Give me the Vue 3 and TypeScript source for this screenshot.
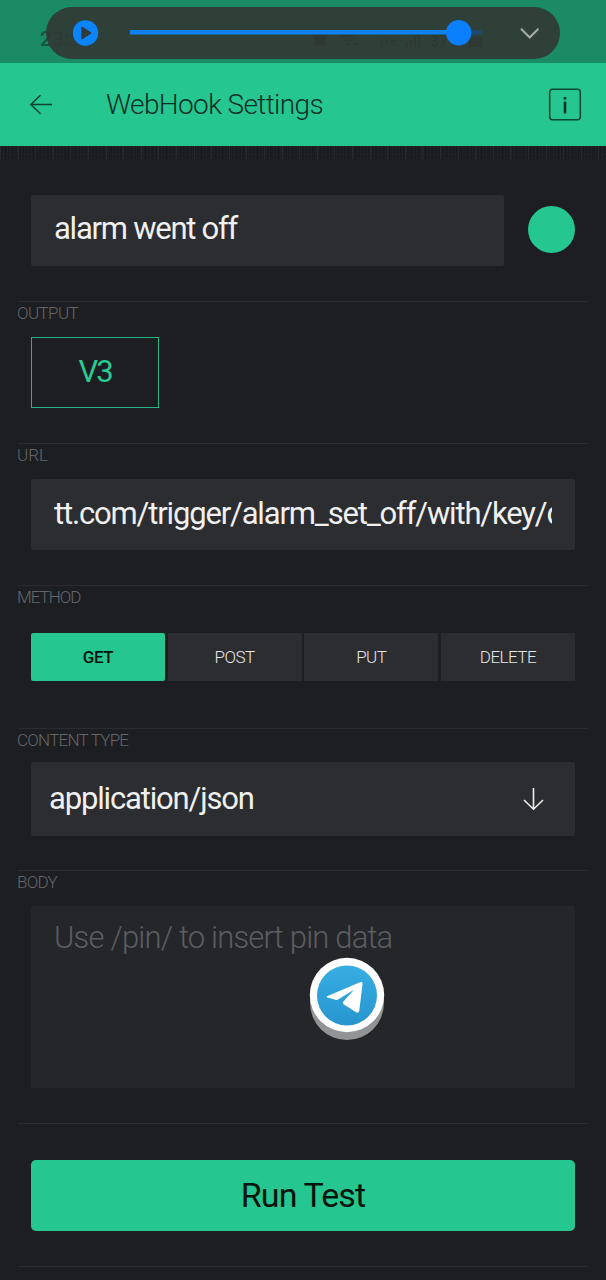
<script setup lang="ts">
import { ref } from 'vue'

const methods = ['GET', 'POST', 'PUT', 'DELETE']
const method = ref('GET')
const url = 'tt.com/trigger/alarm_set_off/with/key/d'
</script>

<template>
  <div class="screen">
    <div class="status">
      <span class="clock">23:51</span>
      <div class="tray">
        <svg width="58" height="14" viewBox="0 0 58 14">
          <path d="M1 1h12v11H1z" fill="currentColor" />
          <path d="M27 4q7-5 14 0M30 7q4-3 8 0M33 10h3M42 10h4" fill="none" stroke="currentColor" stroke-width="2" />
        </svg>
        <span class="lte">LTE</span>
        <svg width="16" height="14" viewBox="0 0 16 14">
          <path d="M2 13V9M6 13V6M10 13V3M14 13V1" stroke="currentColor" stroke-width="2" />
        </svg>
        <span class="charge">37%</span>
        <svg width="14" height="14" viewBox="0 0 14 14"><path d="M0 3h13v10H0z" fill="currentColor" /></svg>
      </div>
      <div class="player">
        <svg width="514" height="52" viewBox="0 0 514 52">
          <circle cx="39.5" cy="26" r="12.7" fill="#0a84ff" />
          <path d="M36 20.5l8.5 5.5-8.5 5.5z" fill="#303b37" stroke="#303b37" stroke-width="1.5" stroke-linejoin="round" />
          <path d="M413 25.5h23" stroke="#1d4a70" stroke-width="4.5" />
          <path d="M84 25.3h329" stroke="#1181f0" stroke-width="4.6" />
          <circle cx="412.7" cy="25.8" r="12.7" fill="#0a80ff" />
          <path d="M475 21.8l8.7 8.7 8.7-8.7" fill="none" stroke="#a6aaa8" stroke-width="2.1" />
        </svg>
      </div>
    </div>

    <header class="bar">
      <svg class="back" width="24" height="22" viewBox="0 0 24 22">
        <path d="M23 10.5H1.8M11.5 1.3L1.8 10.5l9.7 9.2" fill="none" stroke="#0c4231" stroke-width="1.5" />
      </svg>
      <h1>WebHook Settings</h1>
      <svg class="info" width="34" height="34" viewBox="0 0 34 34">
        <rect x="1.7" y="1.2" width="30.6" height="30.6" rx="3" fill="none" stroke="#0c4833" stroke-width="1.6" />
        <path d="M17 13.4v12.2M17 9v2.4" stroke="#0b3024" stroke-width="2.6" />
      </svg>
    </header>
    <div class="ruler"></div>

    <main>
      <div class="name-row">
        <div class="field name"><span>alarm went off</span></div>
        <i class="swatch"></i>
      </div>

      <section class="output">
        <h2>OUTPUT</h2>
        <div class="pin"><span>V3</span></div>
      </section>

      <section class="url">
        <h2>URL</h2>
        <div class="field"><span class="clip">{{ url }}</span></div>
      </section>

      <section class="method">
        <h2>METHOD</h2>
        <div class="tabs">
          <button v-for="m in methods" :key="m" :class="{ on: m === method }" @click="method = m">{{ m }}</button>
        </div>
      </section>

      <section class="type">
        <h2>CONTENT TYPE</h2>
        <div class="field select">
          <span>application/json</span>
          <svg width="22" height="24" viewBox="0 0 22 24">
            <path d="M11.5 1v21M2 13l9.5 9.2L21 13" fill="none" stroke="#eee" stroke-width="1.6" />
          </svg>
        </div>
      </section>

      <section class="body">
        <h2>BODY</h2>
        <div class="area"><span>Use /pin/ to insert pin data</span></div>
      </section>

      <section class="run">
        <button class="test"><span>Run Test</span></button>
      </section>
      <section class="tail"></section>
    </main>

    <svg class="bubble" width="80" height="88" viewBox="0 0 80 88">
      <defs>
        <linearGradient id="sky" x1="0" y1="0" x2="0" y2="1">
          <stop offset="0" stop-color="#37aee2" />
          <stop offset="1" stop-color="#2795cf" />
        </linearGradient>
      </defs>
      <circle cx="40" cy="48" r="37" fill="#929394" />
      <circle cx="40" cy="40" r="37.2" fill="#fff" />
      <circle cx="40" cy="40.5" r="30" fill="url(#sky)" />
      <path d="M20 41.2L53 27.2q2.8-1 2.5 2L52.3 55.5q-.7 3.2-3.2 1.8L36.6 49.2q-1.6-1.3-.2-2.7L47 34.8 31 44.5q-1.2.7-2.5.2l-8.1-2.3q-1.2-.5-.4-1.2z" fill="#fff" />
    </svg>
  </div>
</template>

<style>
body {
  background: #1d1e22;
}
</style>

<style scoped>
.screen {
  position: relative;
  width: 606px;
  height: 1280px;
  overflow: hidden;
  background: #1d1e22;
  font-family: Roboto, 'Liberation Sans', sans-serif;
  font-weight: 300;
}
.status {
  position: relative;
  height: 63px;
  background: #1a8b64;
  color: #145440;
}
.clock {
  position: absolute;
  left: 40px;
  top: 26px;
  font-size: 21px;
  line-height: 26px;
  font-weight: 500;
}
.tray {
  position: absolute;
  left: 313px;
  top: 33px;
  height: 16px;
  display: flex;
  align-items: center;
  gap: 9px;
  font-size: 16px;
  font-weight: 500;
  color: #12442f;
}
.lte {
  font-size: 10px;
}
.player {
  position: absolute;
  left: 46px;
  top: 7px;
  width: 514px;
  height: 52px;
  border-radius: 26px;
  background: rgba(50, 56, 53, 0.91);
}
.player svg {
  display: block;
}
.bar {
  height: 83px;
  background: #25c68f;
  display: flex;
  align-items: center;
  padding: 0 24px 0 29px;
  box-sizing: border-box;
}
h1 {
  margin: 0 0 0 53px;
  flex: 1;
  font-size: 28px;
  line-height: 34px;
  font-weight: 300;
  color: #0b3025;
  letter-spacing: -0.62px;
}
.ruler {
  height: 13px;
  background:
    repeating-linear-gradient(90deg, #27292d 0 1px, transparent 1px 17.6px),
    repeating-linear-gradient(0deg, transparent 0 2.5px, #1b1c20 2.5px 3.5px),
    repeating-linear-gradient(90deg, #222428 0 1px, #1b1c20 1px 3.5px);
}
.name-row {
  height: 142px;
  padding: 36px 31px 0;
  box-sizing: border-box;
  display: flex;
  gap: 24px;
}
.field {
  height: 71px;
  background: #2c2d31;
  border-radius: 2px;
  color: #f0f0f0;
  font-size: 31px;
  line-height: 68px;
  padding: 0 23px;
  box-sizing: border-box;
  white-space: nowrap;
  font-weight: 400;
}
.name {
  width: 473px;
  letter-spacing: -1.25px;
}
.swatch {
  width: 47px;
  height: 47px;
  margin-top: 11px;
  border-radius: 50%;
  background: #25c68f;
}
section {
  margin: 0 18px;
  padding: 0 13px;
  border-top: 1px solid #2b2c30;
  box-sizing: border-box;
  height: 142px;
}
h2 {
  margin: 0 0 0 -14px;
  height: 35px;
  font-size: 17px;
  line-height: 23px;
  font-weight: 300;
  color: #64666a;
  letter-spacing: -0.75px;
}
.output h2 {
  letter-spacing: -0.6px;
}
.url h2 {
  letter-spacing: 0;
}
.method h2 {
  letter-spacing: -1px;
}
.pin {
  width: 128px;
  height: 71px;
  border: 1px solid #25b484;
  box-sizing: border-box;
  color: #28cb94;
  text-align: center;
  font-size: 31px;
  line-height: 68px;
  font-weight: 400;
  letter-spacing: -2px;
}
.clip {
  display: block;
  width: 498px;
  overflow: hidden;
  line-height: 70px;
  letter-spacing: -1.16px;
}
.method {
  height: 143px;
}
.tabs {
  display: grid;
  grid-template-columns: repeat(4, 1fr);
  gap: 2.6px;
  padding-top: 12px;
}
.tabs button {
  height: 48px;
  border: 0;
  padding: 0;
  background: #2c2d31;
  color: #e6e6e6;
  font: 300 17px/48px Roboto, sans-serif;
  letter-spacing: -0.5px;
}
.tabs .on {
  background: #25c68f;
  color: #06130e;
  font-weight: 500;
  letter-spacing: -0.4px;
  border-radius: 2px;
}
.type h2 {
  height: 33px;
}
.select {
  height: 74px;
  padding: 0 31px 0 18px;
  display: flex;
  justify-content: space-between;
  align-items: center;
  letter-spacing: -1.16px;
}
.body {
  height: 253px;
}
.area {
  height: 182px;
  background: #25262a;
  border-radius: 2px;
  padding: 12px 23px;
  box-sizing: border-box;
  font-size: 31px;
  line-height: 40px;
  color: #5c5d60;
  white-space: nowrap;
  letter-spacing: -0.82px;
}
.run {
  height: 143px;
  padding-top: 36px;
}
.test {
  display: block;
  width: 544px;
  height: 71px;
  border: 0;
  border-radius: 5px;
  background: #25c68f;
  color: #04150e;
  font: 400 34px/71px Roboto, sans-serif;
  letter-spacing: -0.9px;
  padding: 0;
}
.bubble {
  position: absolute;
  left: 307px;
  top: 955px;
}
</style>
